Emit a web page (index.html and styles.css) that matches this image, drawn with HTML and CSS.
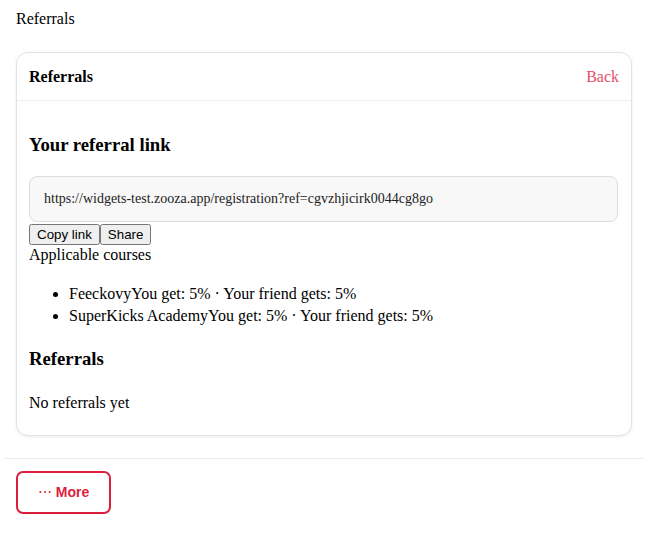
FILE: index.html
```html
<!DOCTYPE html>
<html>
<head>
<meta charset="utf-8">
<link rel="stylesheet" href="styles.css">
</head>
<body>
<div class="page">
  <div class="page-title">Referrals</div>
  <div class="card">
    <div class="card-header">
      <span class="card-title">Referrals</span>
      <a class="back">Back</a>
    </div>
    <div class="card-body">
      <h3 class="section-title">Your referral link</h3>
      <div class="link-box">https://widgets-test.zooza.app/registration?ref=cgvzhjicirk0044cg8go</div>
      <div class="actions"><button>Copy link</button><button>Share</button></div>
      <div class="courses-label">Applicable courses</div>
      <ul class="courses">
        <li>Feeckovy<span>You get: 5% · Your friend gets: 5%</span></li>
        <li>SuperKicks Academy<span>You get: 5% · Your friend gets: 5%</span></li>
      </ul>
      <h3 class="section-title referrals-title">Referrals</h3>
      <p class="empty">No referrals yet</p>
    </div>
  </div>
  <div class="footer">
    <button class="more"><span class="dots">⋯</span> More</button>
  </div>
</div>
</body>
</html>
```
FILE: styles.css
```css
body {
  margin: 0;
  font-family: "Liberation Serif", "Times New Roman", serif;
  font-size: 16px;
  color: #000;
  background: #fff;
}
.page {
  padding: 9px 30px 0 16px;
}
.page-title {
  line-height: 19px;
}
.card {
  margin-top: 24px;
  border: 1px solid #e3e3e3;
  border-radius: 12px;
  box-shadow: 0 1px 3px rgba(0,0,0,0.08);
  background: #fff;
}
.card-header {
  display: flex;
  justify-content: space-between;
  align-items: center;
  height: 47px;
  padding: 0 12px 0 12px;
  border-bottom: 1px solid #ececec;
}
.card-title {
  font-weight: bold;
}
.back {
  color: #e5506a;
  cursor: pointer;
}
.card-body {
  padding: 14px 13px 7px 12px;
}
.section-title {
  font-size: 18.72px;
  margin: 18.72px 0;
}
.link-box {
  margin-top: 20px;
  height: 44px;
  display: flex;
  align-items: center;
  padding: 0 14px;
  background: #f8f8f8;
  border: 1px solid #dcdcdc;
  border-radius: 8px;
  font-size: 14px;
  color: #222;
}
.actions {
  margin-top: 2px;
  display: flex;
}
.actions button {
  font-family: "Liberation Sans", Arial, sans-serif;
  font-size: 13.33px;
}
.courses-label {
  margin-top: 1px;
}
.courses {
  margin: 19px 0 21px;
  padding-left: 40px;
}
.courses li {
  line-height: 22px;
}
.referrals-title {
  margin-top: 21px;
  margin-bottom: 0;
}
.empty {
  margin: 24px 0 16px;
}
.footer {
  margin: 22px -12px 0;
  padding: 12px;
  border-top: 1px solid #ececec;
}
.more {
  width: 95px;
  height: 43px;
  border: 2px solid #dc1e3c;
  border-radius: 7px;
  background: #fff;
  color: #dc1e3c;
  font-family: "Liberation Sans", Arial, sans-serif;
  font-weight: bold;
  font-size: 14px;
  padding: 0;
}
.dots {
  font-weight: normal;
}
```
